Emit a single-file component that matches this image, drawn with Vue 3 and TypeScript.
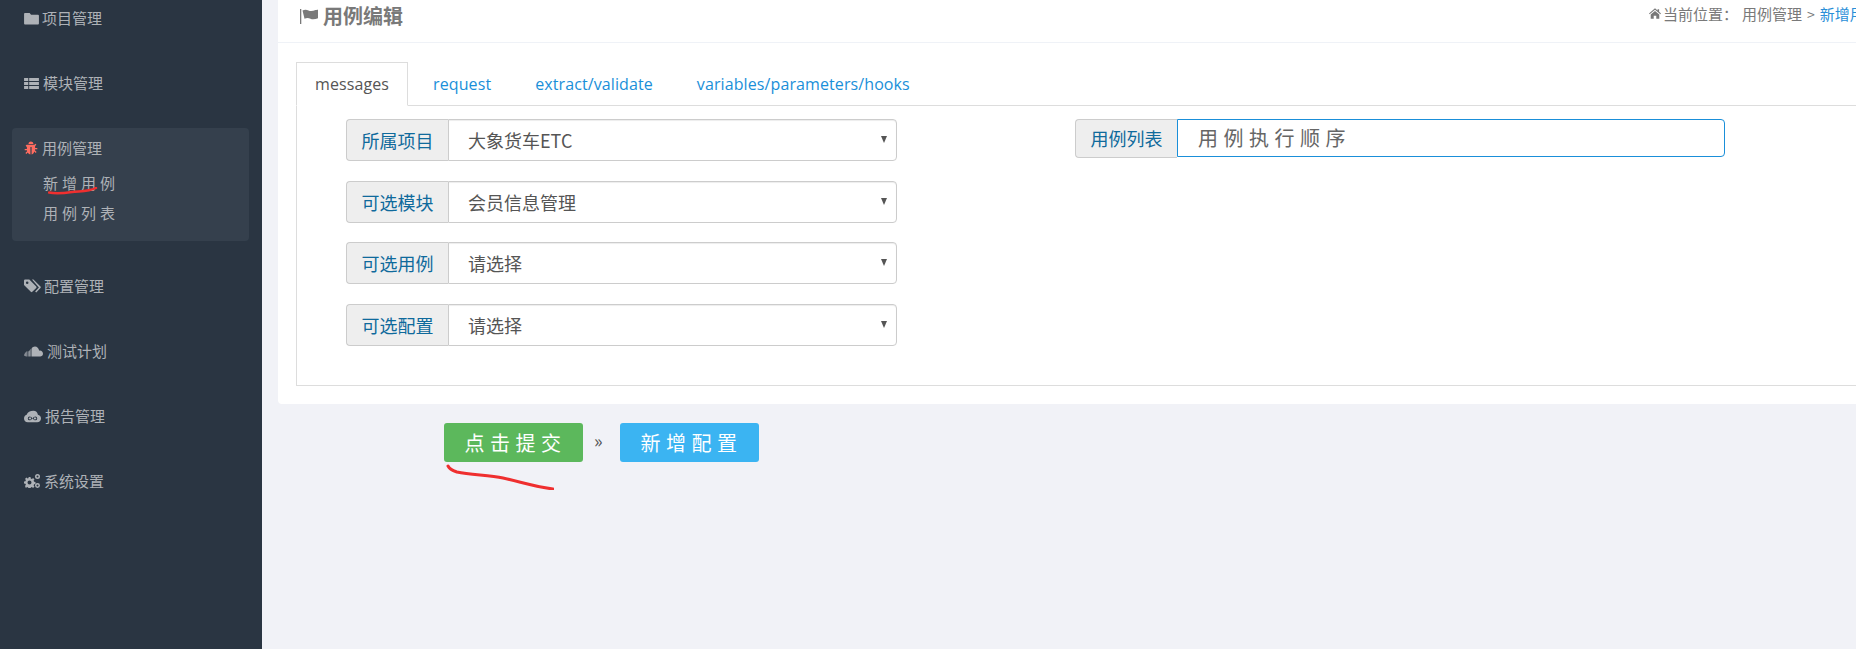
<script setup lang="ts">
interface NavItem {
  label: string
  icon: string
  gap: number
}

const topNav: NavItem[] = [
  { label: '项目管理', icon: 'folder', gap: 3 },
  { label: '模块管理', icon: 'table', gap: 4 }
]

const bottomNav: NavItem[] = [
  { label: '配置管理', icon: 'tag', gap: 3 },
  { label: '测试计划', icon: 'cloud', gap: 4 },
  { label: '报告管理', icon: 'cloudlink', gap: 4 },
  { label: '系统设置', icon: 'cogs', gap: 4 }
]

const leftFields = [
  { label: '所属项目', value: '大象货车ETC' },
  { label: '可选模块', value: '会员信息管理' },
  { label: '可选用例', value: '请选择' },
  { label: '可选配置', value: '请选择' }
]

const tabs = ['messages', 'request', 'extract/validate', 'variables/parameters/hooks']
</script>

<template>
  <div class="page">
    <aside class="sidebar">
      <div v-for="item in topNav" :key="item.label" class="nav-item" :style="{ gap: item.gap + 'px' }">
        <svg class="nav-icon" viewBox="0 0 16 14">
          <path v-if="item.icon === 'folder'" d="M1 1h5l1.500 2H15a1 1 0 0 1 1 1v8.500a1 1 0 0 1-1 1H1a1 1 0 0 1-1-1V2a1 1 0 0 1 1-1z" />
          <path v-else d="M0 1h4.500v3.300H0zM5.500 1H16v3.300H5.500zM0 5.300h4.500v3.300H0zM5.500 5.300H16v3.300H5.500zM0 9.600h4.500v3.400H0zM5.500 9.600H16V13H5.500z" />
        </svg>
        <span>{{ item.label }}</span>
      </div>

      <div class="nav-active">
        <div class="nav-item nav-item-open">
          <svg class="nav-icon nav-icon-red" viewBox="0 0 14 14">
            <path d="M4.500 3a2.500 2.500 0 0 1 5 0zM3.600 3.800h6.800l1-1 1 .9-1.300 1.300v2h2.200v1.300h-2.200l-.2 1 1.700 1.800-1 .9-1.300-1.400C9.800 12.700 8.500 13.500 7.600 13.500V6H6.400v7.500c-.9 0-2.200-.8-2.700-1.900l-1.300 1.400-1-.9 1.700-1.800-.2-1H.7V8h2.200V6L1.600 4.700l1-.9z" />
          </svg>
          <span>用例管理</span>
        </div>
        <div class="sub-item">新增用例</div>
        <div class="sub-item">用例列表</div>
        <svg class="scribble scribble-nav" viewBox="0 0 50 8">
          <path d="M1 5.500c8 1.500 16 .5 23-.5 8-1 16 0 24-4" />
        </svg>
      </div>

      <div v-for="item in bottomNav" :key="item.label" class="nav-item" :style="{ gap: item.gap + 'px' }">
        <svg v-if="item.icon === 'tag'" class="nav-icon nav-icon-tag" viewBox="0 0 16 14">
          <path d="M0 1.500A1 1 0 0 1 1 .500h4l6.500 6.500a1 1 0 0 1 0 1.400L7.800 12a1 1 0 0 1-1.400 0L0 5.500zM3 2.200a1.200 1.200 0 1 0 0 2.400 1.200 1.200 0 0 0 0-2.400z" />
          <path d="M7.500.500h1.400L15.500 7a1 1 0 0 1 0 1.400L11.500 12.600l-1-1L14 8z" />
        </svg>
        <svg v-else-if="item.icon === 'cloud'" class="nav-icon nav-icon-wide" viewBox="0 0 20 10" preserveAspectRatio="none">
          <path d="M8 9.500V2.200c1-1 2-1.700 3.500-1.700 2.300 0 4 1.500 4.500 3.800 2-.5 4 .9 4 2.700s-1.500 2.500-3 2.500zM6.800 9.500V3h.7v6.500zM5.400 9.500V4h.8v5.500zM4 9.500V4.800h.8v4.700zM2.500 9.500V5h.8v4.500zM1 9.300V6h.8v3.300zM0 9V7h.5v2z" />
        </svg>
        <svg v-else-if="item.icon === 'cloudlink'" class="nav-icon nav-icon-cloudlink" viewBox="0 0 18 13">
          <path fill-rule="evenodd" d="M10 .500c2.500 0 4.300 1.800 4.700 4.100C16.600 5 18 6.500 18 8.500c0 2.300-1.800 4-4 4H4c-2.300 0-4-1.800-4-4 0-1.800 1.200-3.300 2.800-3.800C3.700 2 6.500.500 10 .500zM6 6.500a2 2 0 1 0 0 4c1.100 0 1.800-.8 3-2 1.200 1.200 1.900 2 3 2a2 2 0 1 0 0-4c-1.100 0-1.800.8-3 2-1.200-1.200-1.900-2-3-2zm0 1a1 1 0 0 1 1.500.9 1 1 0 0 1-1.500 1.100 1 1 0 0 1 0-2zm6 0a1 1 0 0 1 0 2 1 1 0 0 1-1.500-1 1 1 0 0 1 1.500-1z" />
        </svg>
        <svg v-else class="nav-icon nav-icon-cogs" viewBox="0 0 16 14">
          <path fill-rule="evenodd" d="M4.500 3h2l.3 1.400 1.100.5L9.100 4l1.400 1.400-.9 1.200.5 1.100 1.400.3v2l-1.400.3-.5 1.100.9 1.200-1.400 1.400-1.200-.9-1.100.5-.3 1.400-2-.1-.3-1.300-1.100-.5-1.200.9L1 12l.9-1.200-.5-1.100L0 9.500v-2l1.400-.3.5-1.100L1 4.900l1.400-1.400 1.200.9 1.100-.5zm1 3.500a2 2 0 1 0 0 4 2 2 0 0 0 0-4z" />
          <path fill-rule="evenodd" d="M13.500 0a2.500 2.500 0 1 1 0 5 2.500 2.500 0 0 1 0-5zm0 1.500a1 1 0 1 0 0 2 1 1 0 0 0 0-2zM13.500 9a2.500 2.500 0 1 1 0 5 2.500 2.500 0 0 1 0-5zm0 1.500a1 1 0 1 0 0 2 1 1 0 0 0 0-2z" />
        </svg>
        <span>{{ item.label }}</span>
      </div>
    </aside>

    <main class="main">
      <section class="panel">
        <header class="panel-head">
          <h1 class="panel-title">
            <svg class="flag" viewBox="0 0 18 15">
              <path d="M0 0h1.300v15H0zM2.500 1.500c2-1 4-1 6 0s4.500.6 7-.4c1-.2 2.500-.4 2.500-.4v8.500c-2.500 1-5.500 1.500-7.500.5s-4-1-6 0z" />
            </svg>
            用例编辑
          </h1>
          <div class="crumbs">
            <svg class="home" viewBox="0 0 14 12">
              <path d="M7 0l3 2.600V1h1.800v3.100L14 6l-.7.800L7 1.500.7 6.800 0 6zM2 7.200 7 3l5 4.200V12H8.500V8.500h-3V12H2z" />
            </svg>
            <span class="crumb-label">当前位置：</span>
            <span class="crumb-link">用例管理</span>
            <span class="crumb-sep">&gt;</span>
            <span class="crumb-now">新增用例</span>
          </div>
        </header>

        <div class="panel-body">
          <ul class="tabs">
            <li v-for="(tab, i) in tabs" :key="tab" class="tab" :class="{ 'tab-active': i === 0 }">{{ tab }}</li>
          </ul>
          <div class="tab-pane">
            <div class="col-left">
              <div v-for="field in leftFields" :key="field.label" class="group">
                <span class="addon">{{ field.label }}</span>
                <div class="select">
                  <span>{{ field.value }}</span>
                  <i class="caret"></i>
                </div>
              </div>
            </div>
            <div class="col-right">
              <div class="group group-input">
                <span class="addon">用例列表</span>
                <div class="input">用例执行顺序</div>
              </div>
            </div>
          </div>
        </div>
      </section>

      <div class="actions">
        <button type="button" class="btn btn-green">点击提交</button>
        <span class="arrows">»</span>
        <button type="button" class="btn btn-blue">新增配置</button>
        <svg class="scribble scribble-btn" viewBox="0 0 108 26">
          <path d="M2 2c2 4 6 5 9 6 14 3 32 3 46 6 18 4 34 9 50 11" />
        </svg>
      </div>
    </main>
  </div>
</template>

<style>
html,
body {
  margin: 0;
  overflow: hidden;
  background: #f1f2f7;
}
</style>

<style scoped>
.page {
  display: flex;
  width: 1856px;
  height: 649px;
  overflow: hidden;
  font-family: "Noto Sans CJK SC", sans-serif;
  font-size: 15px;
  color: #555;
  background: #f1f2f7;
}

.sidebar {
  width: 262px;
  flex-shrink: 0;
  box-sizing: border-box;
  padding: 0 13px 0 12px;
  background: #2a3542;
  color: #aeb2b7;
}

.nav-item {
  display: flex;
  align-items: center;
  height: 20px;
  margin-bottom: 45px;
  padding-left: 12px;
  line-height: 20px;
}

.nav-item:first-child {
  margin-top: 8px;
}

.nav-icon {
  width: 15px;
  height: 13px;
  flex-shrink: 0;
  fill: #aeb2b7;
}

.nav-icon-tag {
  width: 17px;
  height: 15px;
}

.nav-icon-wide {
  width: 19px;
  height: 11px;
}

.nav-icon-cloudlink {
  width: 17px;
}

.nav-icon-cogs {
  width: 16px;
  height: 14px;
}

.nav-icon-red {
  width: 14px;
  height: 14px;
  margin-right: 4px;
  fill: #ff6c60;
}

.nav-active {
  position: relative;
  height: 113px;
  box-sizing: border-box;
  margin-top: -10px;
  margin-bottom: 35px;
  padding-top: 10px;
  background: #35404d;
  border-radius: 4px;
}

.nav-item-open {
  margin-bottom: 15px;
}

.nav-item-open:first-child {
  margin-top: 0;
}

.sub-item {
  height: 30px;
  padding-left: 31px;
  line-height: 20px;
  letter-spacing: 4px;
}

.scribble {
  position: absolute;
  fill: none;
  stroke: #ef2f2f;
  stroke-linecap: round;
}

.scribble-nav {
  left: 36px;
  top: 59px;
  width: 50px;
  height: 8px;
  stroke-width: 2.500;
}

.main {
  flex: 1;
  min-width: 0;
  padding: 0 0 0 16px;
}

.panel {
  box-sizing: border-box;
  height: 404px;
  background: #fff;
  border-radius: 0 0 0 4px;
}

.panel-head {
  display: flex;
  align-items: center;
  justify-content: space-between;
  box-sizing: border-box;
  height: 43px;
  padding: 0 0 10px 22px;
  border-bottom: 1px solid #eff2f7;
  white-space: nowrap;
}

.panel-title {
  display: flex;
  align-items: center;
  gap: 5px;
  margin: 0;
  font-size: 20px;
  font-weight: 700;
  line-height: 30px;
  color: #797979;
}

.flag {
  width: 18px;
  height: 15px;
  fill: #797979;
}

.crumbs {
  display: flex;
  align-items: center;
  width: 207px;
  flex-shrink: 0;
  margin-bottom: 5px;
  overflow: hidden;
  color: #797979;
}

.home {
  width: 12px;
  height: 11px;
  flex-shrink: 0;
  fill: #797979;
}

.crumb-label {
  margin-left: 2px;
}

.crumb-link {
  margin-left: 4px;
}

.crumb-sep {
  margin: 0 5px;
  font-size: 14px;
}

.crumb-now {
  color: #2a8fd8;
}

.panel-body {
  padding: 19px 0 0 18px;
}

.tabs {
  display: flex;
  box-sizing: border-box;
  height: 44px;
  margin: 0;
  padding: 0;
  list-style: none;
  border-bottom: 1px solid #ddd;
}

.tab {
  box-sizing: border-box;
  height: 44px;
  padding: 0 18px;
  margin-right: 6px;
  border: 1px solid transparent;
  font-family: "Open Sans", sans-serif;
  font-size: 16px;
  letter-spacing: 0.1px;
  line-height: 42px;
  color: #1a8fd9;
}

.tab-active {
  color: #555;
  background: #fff;
  border-color: #ddd;
  border-bottom-color: #fff;
}

.tab-pane {
  display: flex;
  box-sizing: border-box;
  height: 280px;
  padding-top: 13px;
  padding-left: 49px;
  border-left: 1px solid #ddd;
  border-bottom: 1px solid #ddd;
}

.col-left {
  width: 551px;
  flex-shrink: 0;
}

.col-right {
  margin-left: 178px;
  width: 650px;
}

.group {
  display: flex;
  height: 42px;
  margin-bottom: 19.67px;
}

.group-input {
  height: 39px;
}

.addon {
  box-sizing: border-box;
  width: 102px;
  flex-shrink: 0;
  text-align: center;
  font-size: 18px;
  line-height: 40px;
  color: #0f6a9c;
  background: #eee;
  border: 1px solid #ccc;
  border-right: 0;
  border-radius: 4px 0 0 4px;
}

.group-input .addon {
  line-height: 37px;
}

.select {
  position: relative;
  flex: 1;
  box-sizing: border-box;
  height: 42px;
  padding-left: 19px;
  border: 1px solid #ccc;
  border-radius: 0 4px 4px 0;
  box-shadow: inset 0 1px 1px rgba(0, 0, 0, 0.075);
  font-size: 18px;
  line-height: 40px;
  color: #555;
  background: #fff;
}

.caret {
  position: absolute;
  right: 9px;
  top: 16px;
  width: 0;
  height: 0;
  border-left: 3.5px solid transparent;
  border-right: 3.5px solid transparent;
  border-top: 7px solid #555;
}

.input {
  flex: 1;
  box-sizing: border-box;
  height: 38px;
  padding-left: 20px;
  border: 1px solid #1a8fd9;
  border-radius: 0 4px 4px 0;
  font-size: 20px;
  letter-spacing: 5.5px;
  line-height: 36px;
  color: #666;
  background: #fff;
}

.actions {
  position: relative;
  display: flex;
  align-items: flex-start;
  margin-top: 19px;
  padding-left: 166px;
}

.btn {
  width: 139px;
  height: 39px;
  padding: 0 0 0 4px;
  border: 0;
  border-radius: 3px;
  font-family: inherit;
  font-size: 20px;
  line-height: 37px;
  letter-spacing: 5.5px;
  color: #fff;
}

.btn-green {
  background: #5cb85c;
}

.btn-blue {
  background: #3bb4f2;
}

.arrows {
  width: 37px;
  padding-left: 11px;
  box-sizing: border-box;
  font-size: 18px;
  line-height: 34px;
  color: #555;
}

.scribble-btn {
  left: 168px;
  top: 41px;
  width: 108px;
  height: 26px;
  stroke-width: 3;
}
</style>
